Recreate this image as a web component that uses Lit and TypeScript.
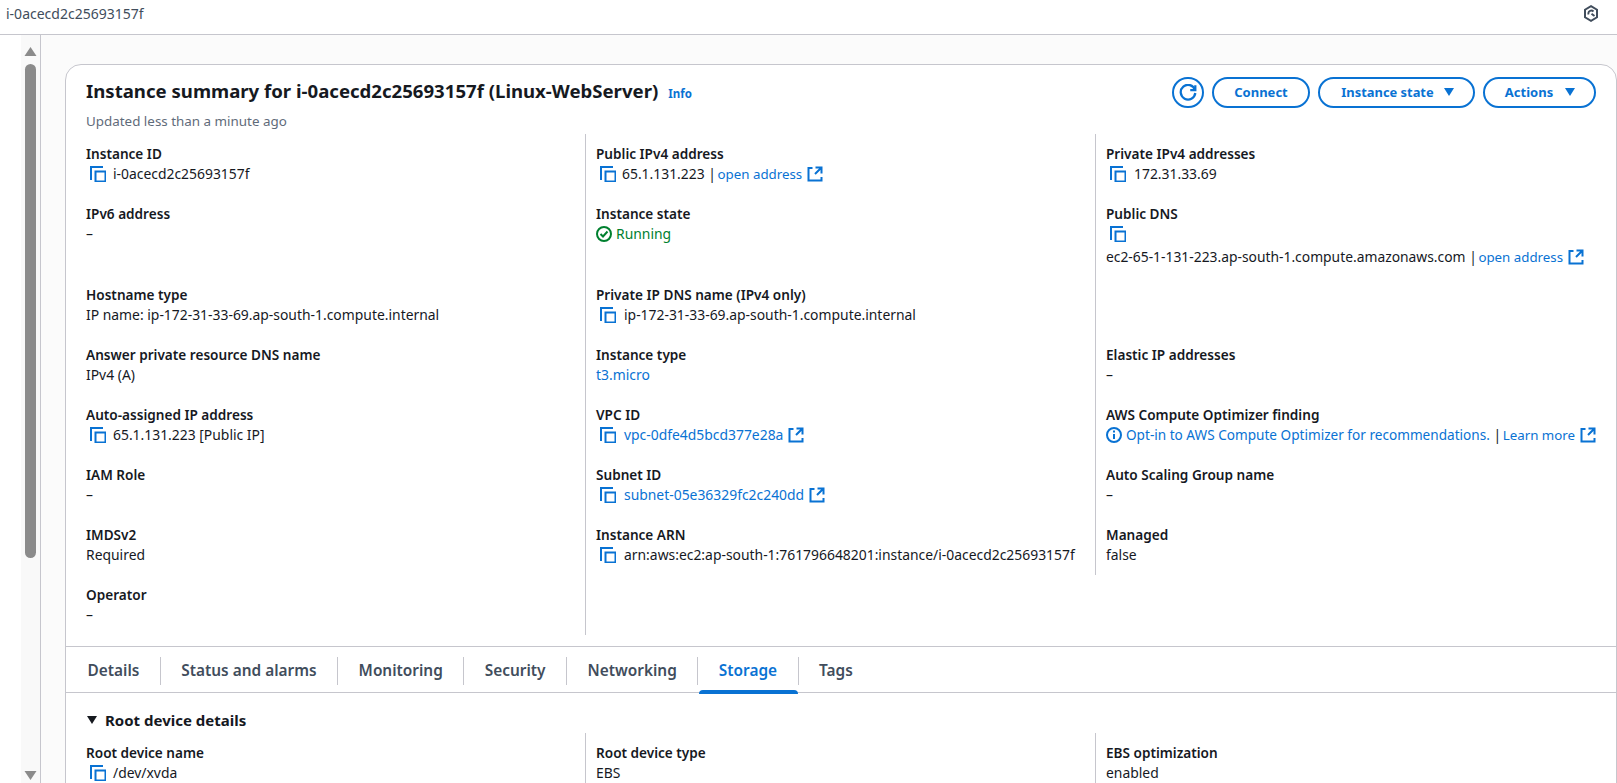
import { LitElement, html, css } from "lit";
import { customElement } from "lit/decorators.js";

const copy = html`<svg class="ic copy" viewBox="0 0 16 16" fill="none" stroke="#0972d3" stroke-width="2"><path d="M1 14V1h12"/><rect x="5.5" y="5.5" width="10" height="10"/></svg>`;
const ext = html`<svg class="ic ext" viewBox="0 0 16 16" fill="none" stroke="#0972d3" stroke-width="2"><path d="M14.5 7.5V1.5h-6M14.5 1.5 8 8M5.5 2H1.5v12.5h13V11"/></svg>`;
const caret = html`<svg class="caret" viewBox="0 0 12 10"><path d="M1 1h10L6 9z" fill="#0972d3"/></svg>`;

type Cell = { l: string; v?: any; tall?: boolean } | null;

const c1: Cell[] = [
  { l: "Instance ID", v: html`<span class="cp">${copy}i-0acecd2c25693157f</span>` },
  { l: "IPv6 address", v: "–", tall: true },
  { l: "Hostname type", v: "IP name: ip-172-31-33-69.ap-south-1.compute.internal" },
  { l: "Answer private resource DNS name", v: "IPv4 (A)" },
  { l: "Auto-assigned IP address", v: html`<span class="cp">${copy}65.1.131.223 [Public IP]</span>` },
  { l: "IAM Role", v: "–" },
  { l: "IMDSv2", v: "Required" },
  { l: "Operator", v: "–" },
];
const c2: Cell[] = [
  { l: "Public IPv4 address", v: html`<span class="cp tight">${copy}65.1.131.223 | <a class="sm">open address</a>${ext}</span>` },
  { l: "Instance state", v: html`<span class="ok"><svg class="ic st" viewBox="0 0 16 16" fill="none" stroke="#00802f" stroke-width="2"><circle cx="8" cy="8" r="7"/><path d="M4.5 8 7 10.5 11.5 5.5"/></svg>Running</span>`, tall: true },
  { l: "Private IP DNS name (IPv4 only)", v: html`<span class="cp">${copy}ip-172-31-33-69.ap-south-1.compute.internal</span>` },
  { l: "Instance type", v: html`<a>t3.micro</a>` },
  { l: "VPC ID", v: html`<span class="cp">${copy}<a>vpc-0dfe4d5bcd377e28a</a>${ext}</span>` },
  { l: "Subnet ID", v: html`<span class="cp">${copy}<a>subnet-05e36329fc2c240dd</a>${ext}</span>` },
  { l: "Instance ARN", v: html`<span class="cp">${copy}arn:aws:ec2:ap-south-1:761796648201:instance/i-0acecd2c25693157f</span>` },
];
const c3: Cell[] = [
  { l: "Private IPv4 addresses", v: html`<span class="cp">${copy}172.31.33.69</span>` },
  { l: "Public DNS", v: html`<div class="cp dnsicon">${copy}</div><div class="nowrap dns">ec2-65-1-131-223.ap-south-1.compute.amazonaws.com | <a class="sm">open address</a>${ext}</div>`, tall: true },
  null,
  { l: "Elastic IP addresses", v: "–" },
  { l: "AWS Compute Optimizer finding", v: html`<div class="nowrap"><a class="opt"><svg class="ic st" viewBox="0 0 16 16" fill="none" stroke="#0972d3" stroke-width="2"><circle cx="8" cy="8" r="7"/><path d="M8 7v5M8 3.5v2"/></svg>Opt-in to AWS Compute Optimizer for recommendations.</a> | <a class="sm">Learn more</a>${ext}</div>` },
  { l: "Auto Scaling Group name", v: "–" },
  { l: "Managed", v: "false" },
];

const tabs = ["Details", "Status and alarms", "Monitoring", "Security", "Networking", "Storage", "Tags"];

@customElement("app-root")
export class AppRoot extends LitElement {
  static styles = css`
    :host { display: block; height: 783px; overflow: hidden; font: 400 13.9px/20px "Noto Sans", sans-serif; color: #16191f; background: #fff; }
    a { color: #0972d3; }
    a.sm { font-size: 13.3px; margin-left: -2px; }
    a.opt { font-size: 13.6px; }
    .dns { font-size: 13.85px; }
    .top { display: flex; align-items: center; justify-content: space-between; padding: 0 18px 7px 6px; border-bottom: 1px solid #c6c6cd; color: #414d5c; font-size: 14px; height: 27px; }
    .hex { width: 16px; height: 17px; }
    .main { display: flex; height: 748px; overflow: hidden; }
    .side { width: 41px; flex: none; border-right: 1px solid #c6c6cd; padding-left: 21px; box-sizing: border-box; }
    .track { height: 100%; background: #f9f9f9; display: flex; flex-direction: column; align-items: center; padding-left: 4px; padding-right: 4px; box-sizing: border-box; }
    .arrow { width: 13px; height: 9px; margin-top: 12px; flex: none; }
    .thumb { width: 11px; height: 494px; border-radius: 6px; background: #8b8b8b; margin-top: 8px; flex: none; }
    .arrow.down { margin-top: auto; margin-bottom: 3px; }
    .content { flex: 1; background: #fbfbfb; padding: 29px 0 0 24px; min-width: 0; }
    .card { background: #fff; border: 1px solid #c6c6cd; border-radius: 16px 16px 0 0; height: 900px; }
    .head { display: flex; justify-content: space-between; padding: 12px 20px 0 20px; height: 69px; box-sizing: border-box; }
    .title { font-size: 18.6px; line-height: 26px; font-weight: 700; margin-top: 1px; white-space: nowrap; }
    .info { font-size: 11.5px; font-weight: 700; color: #0972d3; margin-left: 10px; }
    .sub { color: #5f6b7a; font-size: 13.4px; margin-top: 4px; }
    .btns { display: flex; gap: 8px; }
    .btn { height: 31px; border: 2px solid #0972d3; border-radius: 16px; color: #0972d3; font-weight: 700; font-size: 13px; display: flex; align-items: center; justify-content: center; box-sizing: border-box; padding-bottom: 2px; }
    .refresh { width: 32px; padding-bottom: 0; }
    .refresh svg { width: 18px; height: 18px; }
    .connect { width: 98px; }
    .state { width: 157px; gap: 9px; padding-left: 3px; font-size: 12.9px; }
    .actions { width: 113px; gap: 11px; padding-left: 2px; }
    .caret { width: 12px; height: 10px; }
    .grid, .grid2 { display: grid; grid-template-columns: 519px 510px 1fr; }
    .col { display: flex; flex-direction: column; padding-top: 10px; padding-bottom: 10px; box-sizing: border-box; }
    .col1 { padding-left: 20px; height: 501px; }
    .col2, .col3 { border-left: 1px solid #c6c6cd; padding-left: 10px; }
    .col2 { height: 501px; }
    .col3 { height: 441px; }
    .item { height: 60px; flex: none; }
    .item.tall { height: 81px; }
    .item:last-child { height: 40px; }
    .lbl { font-weight: 600; font-size: 13.6px; white-space: nowrap; }
    .val { white-space: nowrap; }
    .cp { display: flex; align-items: center; white-space: pre; }
    .dnsicon { height: 20px; margin-bottom: 3px; }
    .nowrap { white-space: nowrap; }
    .ic { width: 16px; height: 16px; vertical-align: -3px; }
    .copy { margin: 0 8px 0 4px; flex: none; }
    .col1 .copy { margin-right: 7px; }
    .tight .copy { margin-right: 6px; }
    .ext { margin-left: 5px; flex: none; }
    .st { margin-right: 4px; }
    .ok { color: #00802f; display: flex; align-items: center; }
    .tabwrap { margin-top: 11px; border-top: 1px solid #c6c6cd; border-bottom: 1px solid #c6c6cd; height: 45px; display: flex; align-items: center; padding-left: 1px; }
    .tab { height: 28px; display: flex; align-items: center; padding: 0 20.5px; font-weight: 600; font-size: 15.4px; color: #414d5c; border-right: 1px solid #c6c6cd; position: relative; margin-top: 2px; white-space: nowrap; }
    .tab:last-child { border-right: none; }
    .tab.on { color: #0972d3; }
    .tab.on::after { content: ""; position: absolute; left: 1px; right: 0; bottom: -9px; height: 4px; background: #0972d3; border-radius: 4px 4px 0 0; }
    .sec { padding: 16px 20px 0 21px; font-size: 15px; font-weight: 700; display: flex; align-items: center; gap: 8px; height: 22px; }
    .sec svg { width: 10px; height: 8px; }
    .grid2 { margin-top: 2px; }
    .grid2 .col { height: 60px; padding-bottom: 0; }
  `;

  cell(c: Cell) {
    if (!c) return html`<div class="item"></div>`;
    return html`<div class="item ${c.tall ? "tall" : ""}"><div class="lbl">${c.l}</div><div class="val">${c.v}</div></div>`;
  }

  render() {
    return html`
      <div class="top">
        <span>i-0acecd2c25693157f</span>
        <svg class="hex" viewBox="0 0 16 17" fill="none" stroke="#414d5c" stroke-width="2"><path d="M8 1.2l6 3.5v7.6l-6 3.5-6-3.5V4.700z"/><path d="M11.500 11 8.500 8.800"/><path d="M5.500 9.500A3 3 0 0 1 10.500 6.500" stroke-width="1.800"/></svg>
      </div>
      <div class="main">
        <div class="side">
          <div class="track">
            <svg class="arrow" viewBox="0 0 12 9"><path d="M6 0l6 9H0z" fill="#8b8b8b"/></svg>
            <div class="thumb"></div>
            <svg class="arrow down" viewBox="0 0 12 9"><path d="M0 0h12L6 9z" fill="#8b8b8b"/></svg>
          </div>
        </div>
        <div class="content">
          <div class="card">
            <div class="head">
              <div>
                <div class="title">Instance summary for i-0acecd2c25693157f (Linux-WebServer)<span class="info">Info</span></div>
                <div class="sub">Updated less than a minute ago</div>
              </div>
              <div class="btns">
                <div class="btn refresh"><svg viewBox="0 0 16 16" fill="none" stroke="#0972d3" stroke-width="2"><path d="M10 5.500h4.500V1"/><path d="M14.200 5.200A6.500 6.500 0 1 0 14.500 8"/></svg></div>
                <div class="btn connect">Connect</div>
                <div class="btn state">Instance state ${caret}</div>
                <div class="btn actions">Actions ${caret}</div>
              </div>
            </div>
            <div class="grid">
              <div class="col col1">${c1.map((c) => this.cell(c))}</div>
              <div class="col col2">${c2.map((c) => this.cell(c))}</div>
              <div class="col col3">${c3.map((c) => this.cell(c))}</div>
            </div>
            <div class="tabwrap">
              ${tabs.map((t) => html`<div class="tab ${t === "Storage" ? "on" : ""}">${t}</div>`)}
            </div>
            <div class="sec"><svg viewBox="0 0 10 8"><path d="M0 0h10L5 8z" fill="#16191f"/></svg>Root device details</div>
            <div class="grid2">
              <div class="col col1"><div class="lbl">Root device name</div><div class="val"><span class="cp">${copy}/dev/xvda</span></div></div>
              <div class="col col2"><div class="lbl">Root device type</div><div class="val">EBS</div></div>
              <div class="col col3"><div class="lbl">EBS optimization</div><div class="val">enabled</div></div>
            </div>
          </div>
        </div>
      </div>
    `;
  }
}
